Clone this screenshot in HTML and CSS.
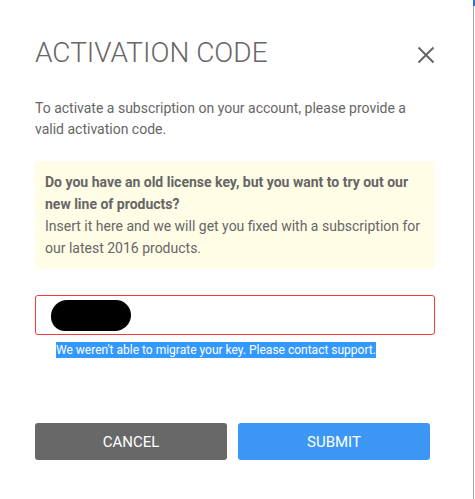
FILE: index.html
```html
<!DOCTYPE html>
<html lang="en">
<head>
    <meta charset="UTF-8">
    <meta name="viewport" content="width=device-width, initial-scale=1.0">
    <title>Activation Code</title>
    <link rel="stylesheet" href="styles.css">
</head>
<body>
    <div class="dialog">
        <div class="dialog-header">
            <h1>ACTIVATION CODE</h1>
            <button class="close" aria-label="Close">
                <svg width="18" height="18" viewBox="0 0 18 18">
                    <path d="M1.5 1.5 L16.5 16.5 M16.5 1.5 L1.5 16.5" stroke="#666" stroke-width="2" fill="none"/>
                </svg>
            </button>
        </div>
        <p class="description">
            To activate a subscription on your account, please provide a
            valid activation code.
        </p>
        <div class="notice">
            <strong>Do you have an old license key, but you want to try out our new line of products?</strong><br>
            Insert it here and we will get you fixed with a subscription for our latest 2016 products.
        </div>
        <div class="field error-field">
            <span class="redacted"></span>
        </div>
        <div class="error-message"><span>We weren't able to migrate your key. Please contact support.</span></div>
        <div class="actions">
            <button class="btn btn-cancel">CANCEL</button>
            <button class="btn btn-submit">SUBMIT</button>
        </div>
    </div>
</body>
</html>
```

FILE: styles.css
```css
:root {
    --text: #666666;
    --notice-bg: #fffde6;
    --error-color: #f03c3c;
    --selection: #3399ff;
    --cancel: #686868;
    --submit: #3b97f3;
}

html, body {
    margin: 0;
    padding: 0;
    background: #ffffff;
}

body {
    font-family: Roboto, "Liberation Sans", sans-serif;
    color: var(--text);
}

.dialog {
    position: relative;
    width: 400px;
    height: 463px;
    padding: 36px 38px 0 35px;
    border-right: 1px solid #a8a8a8;
}

.dialog::before {
    content: "";
    position: absolute;
    top: 0;
    right: -2px;
    width: 2px;
    height: 6px;
    background: #2b78c8;
}

.dialog-header {
    display: flex;
    align-items: center;
    justify-content: space-between;
}

h1 {
    margin: 0;
    font-size: 28px;
    font-weight: 300;
    line-height: 34px;
    color: var(--text);
}

.close {
    background: none;
    border: none;
    padding: 0;
    margin: 3px 0 0 0;
    width: 18px;
    height: 18px;
    cursor: pointer;
}

.close svg {
    display: block;
}

.description {
    margin: 28px 0 0 0;
    font-size: 14px;
    line-height: 21px;
}

.notice {
    margin-top: 21px;
    padding: 10px;
    background: var(--notice-bg);
    border-radius: 3px;
    font-size: 14px;
    line-height: 22px;
}

.notice strong {
    font-weight: 700;
}

.field {
    margin-top: 26px;
    height: 38px;
    border: 1px solid #dddddd;
    border-radius: 3px;
    display: flex;
    align-items: center;
    padding-left: 15px;
}

.error-field {
    border-color: var(--error-color);
}

.redacted {
    display: block;
    width: 80px;
    height: 31px;
    background: #000;
    border-radius: 16px 15px 16px 14px;
}

.error-message {
    margin-top: 8px;
    padding-left: 21px;
    font-size: 12px;
    line-height: 15px;
}

.error-message span {
    background: var(--selection);
    color: #ffffff;
    padding: 1px 0;
}

.actions {
    margin-top: 65px;
    display: flex;
    gap: 11px;
    width: 395px;
}

.btn {
    flex: 1;
    height: 37px;
    border: none;
    border-radius: 3px;
    color: #ffffff;
    font-family: Roboto, "Liberation Sans", sans-serif;
    font-size: 15px;
    cursor: pointer;
}

.btn-cancel {
    background: var(--cancel);
}

.btn-submit {
    background: var(--submit);
}
```
